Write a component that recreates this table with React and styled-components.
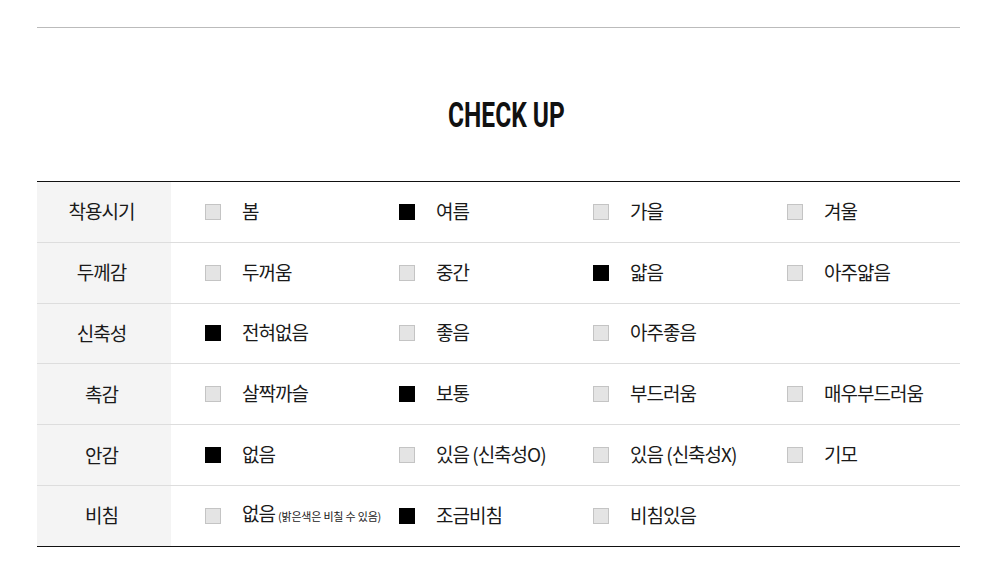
import React from "react";
import styled, { createGlobalStyle } from "styled-components";

const Global = createGlobalStyle`
  html, body { margin: 0; padding: 0; background: #fff; }
  body { font-family: "Noto Sans CJK KR", "Noto Sans", sans-serif; color: #111; }
`;

const Page = styled.div`
  width: 923px;
  margin-left: 37px;
  padding-top: 27px;
`;

const TopRule = styled.div`
  border-top: 1px solid #bbb;
`;

const Title = styled.h2`
  margin: 0;
  padding: 64px 0 49px 15px;
  text-align: center;
  font-size: 35px;
  line-height: 40px;
  height: 40px;
`;

const TitleText = styled.span`
  display: inline-block;
  font-family: Roboto, "Liberation Sans", sans-serif;
  font-weight: 700;
  color: #111;
  transform: scaleX(0.7);
  transform-origin: center;
`;

const Table = styled.div`
  border-top: 1px solid #111;
  border-bottom: 1px solid #111;
`;

const Row = styled.div`
  display: flex;
  height: 59.8px;
  border-top: ${(p) => (p.$first ? "none" : "1px solid #ddd")};
`;

const Label = styled.div`
  width: 134px;
  box-sizing: border-box;
  padding: 0 5px 2px 0;
  flex: none;
  background: #f4f4f4;
  display: flex;
  align-items: center;
  justify-content: center;
  font-size: 19px;
  letter-spacing: -1px;
  color: #1a1a1a;
`;

const Options = styled.div`
  flex: 1;
  display: grid;
  grid-template-columns: repeat(4, 194px);
  align-items: center;
  padding-left: 34px;
`;

const Option = styled.div`
  display: flex;
  align-items: center;
  gap: 21px;
  font-size: 19px;
  line-height: 24px;
  letter-spacing: -1px;
  color: #1a1a1a;
  white-space: nowrap;
`;

const OptionText = styled.span`
  position: relative;
  top: -1px;
`;

const Box = styled.span`
  width: 16px;
  height: 16px;
  box-sizing: border-box;
  flex: none;
  background: ${(p) => (p.$on ? "#000" : "#e4e4e4")};
  border: 1px solid ${(p) => (p.$on ? "#000" : "#c4c4c4")};
`;

const Note = styled.span`
  font-size: 11px;
  letter-spacing: -0.2px;
  margin-left: 3px;
`;

const rows = [
  { label: "착용시기", opts: [["봄"], ["여름", 1], ["가을"], ["겨울"]] },
  { label: "두께감", opts: [["두꺼움"], ["중간"], ["얇음", 1], ["아주얇음"]] },
  { label: "신축성", opts: [["전혀없음", 1], ["좋음"], ["아주좋음"]] },
  { label: "촉감", opts: [["살짝까슬"], ["보통", 1], ["부드러움"], ["매우부드러움"]] },
  { label: "안감", opts: [["없음", 1], ["있음 (신축성O)"], ["있음 (신축성X)"], ["기모"]] },
  { label: "비침", opts: [["없음", 0, "(밝은색은 비칠 수 있음)"], ["조금비침", 1], ["비침있음"]] },
];

export default function App() {
  return (
    <>
      <Global />
      <Page>
        <TopRule />
        <Title>
          <TitleText>CHECK UP</TitleText>
        </Title>
        <Table>
          {rows.map((r, i) => (
            <Row key={r.label} $first={i === 0}>
              <Label>{r.label}</Label>
              <Options>
                {r.opts.map(([t, on, note]) => (
                  <Option key={t}>
                    <Box $on={!!on} />
                    <OptionText>
                      {t}
                      {note && <Note>{note}</Note>}
                    </OptionText>
                  </Option>
                ))}
              </Options>
            </Row>
          ))}
        </Table>
      </Page>
    </>
  );
}
